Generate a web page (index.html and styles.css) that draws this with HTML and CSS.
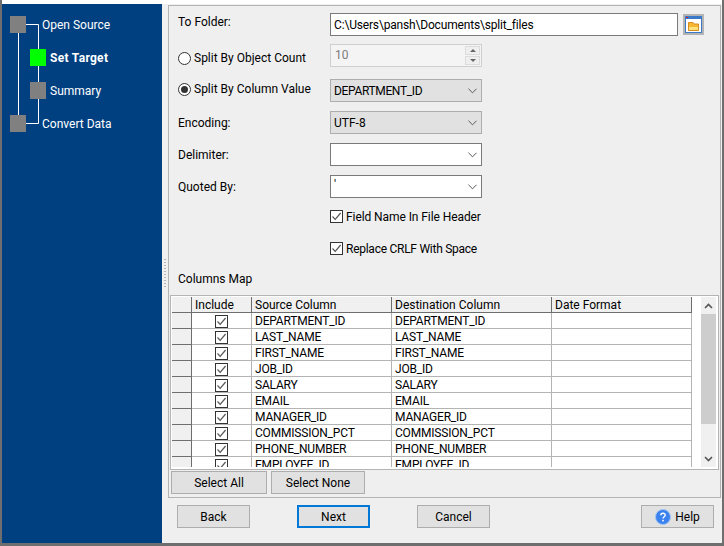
FILE: index.html
```html
<!DOCTYPE html>
<html lang="en">
<head>
<meta charset="utf-8">
<title>Convert Wizard</title>
<link rel="stylesheet" href="styles.css">
</head>
<body>
<svg class="defs" width="0" height="0" aria-hidden="true">
  <symbol id="chev" viewBox="0 0 10 6"><path d="M0.5 0.5 L5 5 L9.5 0.5" fill="none" stroke="#555" stroke-width="1.1"/></symbol>
  <symbol id="check" viewBox="0 0 13 13"><rect x="0.5" y="0.5" width="12" height="12" fill="#fff" stroke="#333"/><path d="M2.5 6.5 L5.2 9.4 L10.6 3" fill="none" stroke="#555" stroke-width="1.2"/></symbol>
</svg>
<div class="window">
  <nav class="sidebar">
    <svg class="tree" width="40" height="110" viewBox="0 0 40 110" aria-hidden="true">
      <path d="M8.5 0 V100 M8.5 8.5 H28.5 V107.5 H8.5" fill="none" stroke="#fff"/>
    </svg>
    <ol class="steps">
      <li class="step step-outer"><span class="node"></span><span>Open Source</span></li>
      <li class="step step-inner step-active"><span class="node node-active"></span><span>Set Target</span></li>
      <li class="step step-inner"><span class="node"></span><span>Summary</span></li>
      <li class="step step-outer"><span class="node"></span><span>Convert Data</span></li>
    </ol>
  </nav>
  <div class="gutter"><div class="grip"></div></div>
  <main class="main">
    <section class="panel">
      <div class="form">
        <div class="row row-folder">
          <label class="label lift-2">To Folder:</label>
          <div class="field field-wide">C:\Users\pansh\Documents\split_files</div>
          <button class="browse" type="button" aria-label="Browse">
            <svg width="17" height="17" viewBox="0 0 17 17">
              <rect x="0.5" y="0.5" width="16" height="16" fill="#fff" stroke="#3a78c8"/>
              <rect x="0" y="0" width="17" height="3" fill="#3a78c8"/>
              <rect x="1" y="1" width="2" height="1" fill="#d0202a"/>
              <path d="M3.5 6.5 H8 L9 8 H13.5 V14.5 H3.5 Z" fill="#f7b733" stroke="#d98a1e"/>
              <path d="M4 11 H13 V14 H4 Z" fill="#fde27a"/>
            </svg>
          </button>
        </div>
        <div class="row row-count">
          <label class="label radio-label drop-2"><span class="radio"></span>Split By Object Count</label>
          <div class="spinner">
            <span>10</span>
            <span class="spin-buttons">
              <span class="spin-btn"><i class="tri-up"></i></span>
              <span class="spin-btn"><i class="tri-down"></i></span>
            </span>
          </div>
        </div>
        <div class="row row-column">
          <label class="label radio-label lift-1"><span class="radio radio-on"></span>Split By Column Value</label>
          <div class="select select-gray"><span class="caps">DEPARTMENT_ID</span><svg class="chev"><use href="#chev"/></svg></div>
        </div>
        <div class="row">
          <label class="label">Encoding:</label>
          <div class="select select-gray"><span>UTF-8</span><svg class="chev"><use href="#chev"/></svg></div>
        </div>
        <div class="row">
          <label class="label">Delimiter:</label>
          <div class="select"><span></span><svg class="chev"><use href="#chev"/></svg></div>
        </div>
        <div class="row">
          <label class="label">Quoted By:</label>
          <div class="select"><span class="quote">'</span><svg class="chev"><use href="#chev"/></svg></div>
        </div>
        <div class="row row-check">
          <label class="check-label"><svg class="check"><use href="#check"/></svg>Field Name In File Header</label>
        </div>
        <div class="row row-check row-check-2">
          <label class="check-label check-label-tight"><svg class="check"><use href="#check"/></svg>Replace CRLF With Space</label>
        </div>
      </div>
      <h2 class="map-title">Columns Map</h2>
      <div class="grid-box">
        <div class="grid-view">
          <table class="grid">
            <colgroup><col class="c-row"><col class="c-inc"><col class="c-src"><col class="c-dst"><col class="c-fmt"></colgroup>
            <thead><tr><th></th><th>Include</th><th>Source Column</th><th>Destination Column</th><th>Date Format</th></tr></thead>
            <tbody>
              <tr><th></th><td class="cb"><svg class="check"><use href="#check"/></svg></td><td>DEPARTMENT_ID</td><td>DEPARTMENT_ID</td><td></td></tr>
              <tr><th></th><td class="cb"><svg class="check"><use href="#check"/></svg></td><td>LAST_NAME</td><td>LAST_NAME</td><td></td></tr>
              <tr><th></th><td class="cb"><svg class="check"><use href="#check"/></svg></td><td>FIRST_NAME</td><td>FIRST_NAME</td><td></td></tr>
              <tr><th></th><td class="cb"><svg class="check"><use href="#check"/></svg></td><td>JOB_ID</td><td>JOB_ID</td><td></td></tr>
              <tr><th></th><td class="cb"><svg class="check"><use href="#check"/></svg></td><td>SALARY</td><td>SALARY</td><td></td></tr>
              <tr><th></th><td class="cb"><svg class="check"><use href="#check"/></svg></td><td>EMAIL</td><td>EMAIL</td><td></td></tr>
              <tr><th></th><td class="cb"><svg class="check"><use href="#check"/></svg></td><td>MANAGER_ID</td><td>MANAGER_ID</td><td></td></tr>
              <tr><th></th><td class="cb"><svg class="check"><use href="#check"/></svg></td><td>COMMISSION_PCT</td><td>COMMISSION_PCT</td><td></td></tr>
              <tr><th></th><td class="cb"><svg class="check"><use href="#check"/></svg></td><td>PHONE_NUMBER</td><td>PHONE_NUMBER</td><td></td></tr>
              <tr><th></th><td class="cb"><svg class="check"><use href="#check"/></svg></td><td>EMPLOYEE_ID</td><td>EMPLOYEE_ID</td><td></td></tr>
            </tbody>
          </table>
        </div>
        <div class="scrollbar">
          <div class="sb-arrow"><svg width="9" height="6" viewBox="0 0 9 6"><path d="M1 5 L4.5 1.5 L8 5" fill="none" stroke="#555" stroke-width="1.6"/></svg></div>
          <div class="sb-thumb"></div>
          <div class="sb-arrow sb-arrow-end"><svg width="9" height="6" viewBox="0 0 9 6"><path d="M1 1 L4.5 4.5 L8 1" fill="none" stroke="#555" stroke-width="1.6"/></svg></div>
        </div>
      </div>
      <div class="select-buttons">
        <button class="btn btn-all" type="button">Select All</button>
        <button class="btn btn-none" type="button">Select None</button>
      </div>
    </section>
    <footer class="footer">
      <button class="btn btn-nav" type="button">Back</button>
      <button class="btn btn-nav btn-default" type="button">Next</button>
      <button class="btn btn-nav" type="button">Cancel</button>
      <button class="btn btn-nav btn-help" type="button">
        <svg width="16" height="16" viewBox="0 0 16 16" aria-hidden="true">
          <circle cx="8" cy="8" r="7.5" fill="#3b82ee" stroke="#9cc2f5"/>
          <path d="M5.8 6.2 C5.8 3.6 10.2 3.6 10.2 6.1 C10.2 7.8 8 7.7 8 9.6" fill="none" stroke="#fff" stroke-width="1.4"/>
          <rect x="7.2" y="10.8" width="1.6" height="1.6" fill="#fff"/>
        </svg>
        <span>Help</span>
      </button>
    </footer>
  </main>
</div>
</body>
</html>
```
FILE: styles.css
```css
* { box-sizing: border-box; }
html, body { margin: 0; padding: 0; }
body {
  width: 724px;
  height: 546px;
  overflow: hidden;
  background: #fff;
  font: 12px/16px Roboto, "Noto Sans", sans-serif;
  color: #000;
}
.defs { display: block; height: 0; }
.window {
  display: flex;
  width: 724px;
  height: 546px;
  background: linear-gradient(#fff 4px, #f0f0f0 4px);
  border-left: 2px solid #6e6e6e;
  border-right: 2px solid #6e6e6e;
  border-bottom: 3px solid #6e6e6e;
}
.sidebar {
  position: relative;
  width: 160px;
  margin-top: 4px;
  background: #004080;
  color: #fff;
}
.tree { position: absolute; left: 8px; top: 12px; }
.steps {
  position: relative;
  list-style: none;
  margin: 0;
  padding: 12px 0 0;
}
.step { display: flex; align-items: center; height: 17px; margin-bottom: 16px; }
.step-outer { padding-left: 8px; gap: 16px; }
.step-inner { padding-left: 28px; gap: 4px; }
.step-active { font-weight: 700; letter-spacing: 0.3px; }
.node { width: 16px; height: 17px; background: #808080; }
.node-active { background: #00ff00; }

.gutter {
  display: flex;
  align-items: center;
  justify-content: center;
  width: 6px;
  padding-top: 4px;
}
.grip {
  width: 2px;
  height: 30px;
  background: repeating-linear-gradient(#b4b4b4 0 1px, transparent 1px 3px);
}
.main { display: flex; flex-direction: column; width: 553px; padding-top: 5px; }
.panel {
  height: 493px;
  padding-top: 7px;
  background: #efefef;
  border: 1px solid #b4b4b4;
}
.form { display: flex; flex-direction: column; padding-left: 9px; }
.row { display: flex; align-items: center; height: 23px; margin-bottom: 9px; }
.row-folder { margin-bottom: 8px; }
.row-count { margin-bottom: 12px; }
.row-check { margin-top: -2px; padding-left: 152px; }
.row-check-2 { margin-top: 0; margin-bottom: 0; }
.label { display: flex; align-items: center; width: 152px; flex: none; }
.lift-2 { margin-top: -5px; }
.lift-1 { margin-top: -3px; }
.drop-2 { margin-top: 5px; }
.radio-label { gap: 3px; }
.radio {
  position: relative;
  width: 13px;
  height: 13px;
  border: 1px solid #333;
  border-radius: 50%;
  background: #fff;
}
.radio-on::after {
  content: "";
  position: absolute;
  inset: 2px;
  border-radius: 50%;
  background: #333;
}
.field {
  width: 348px;
  height: 23px;
  padding: 3px 3px 0;
  letter-spacing: -0.17px;
  background: #fff;
  border: 1px solid #7a7a7a;
}
.browse {
  display: flex;
  align-items: center;
  justify-content: center;
  width: 21px;
  height: 21px;
  margin-left: 5px;
  padding: 0;
  background: #e1e1e1;
  border: 2px solid #b4b4b4;
}
.spinner {
  display: flex;
  justify-content: space-between;
  width: 152px;
  height: 23px;
  padding: 0 1px 1px 4px;
  color: #7d7d7d;
  background: #f4f4f4;
  border: 1px solid #cfcfcf;
}
.spinner > span:first-child { margin-top: 2px; }
.spin-buttons { display: flex; flex-direction: column; width: 15px; gap: 1px; padding-top: 1px; }
.spin-btn {
  display: flex;
  align-items: center;
  justify-content: center;
  height: 9px;
  background: #efefef;
  border: 1px solid #dcdcdc;
}
.tri-up, .tri-down { width: 0; height: 0; border-left: 3px solid transparent; border-right: 3px solid transparent; }
.tri-up { border-bottom: 3px solid #666; }
.tri-down { border-top: 3px solid #666; }
.select {
  display: flex;
  align-items: center;
  justify-content: space-between;
  width: 152px;
  height: 23px;
  padding: 0 4px 0 3px;
  background: #fff;
  border: 1px solid #7a7a7a;
}
.select-gray { background: #e1e1e1; border-color: #adadad; }
.caps { letter-spacing: -0.35px; }
.quote { margin-top: -3px; }
.chev { width: 9px; height: 6px; flex: none; }
.check { width: 13px; height: 13px; flex: none; }
.check-label { display: flex; align-items: center; gap: 3px; letter-spacing: -0.08px; }
.check-label-tight { letter-spacing: -0.26px; }
.map-title {
  margin: 11px 0 8px 9px;
  font-size: 12px;
  line-height: 16px;
  font-weight: 400;
}
.grid-box {
  display: flex;
  height: 175px;
  margin-left: 1px;
  width: 549px;
  padding: 1px 1px 2px 1px;
  background: #fff;
  border: 1px solid #b4b4b4;
}
.grid-view { width: 520px; height: 170px; overflow: hidden; flex: none; }
.grid { width: 520px; table-layout: fixed; border-collapse: separate; border-spacing: 0; }
.c-row { width: 20px; }
.c-inc { width: 60px; }
.c-src { width: 140px; }
.c-dst { width: 160px; }
.c-fmt { width: 140px; }
.grid th, .grid td {
  height: 16px;
  padding: 1px 3px 0;
  font-weight: 400;
  text-align: left;
  line-height: 14px;
  white-space: nowrap;
  overflow: hidden;
}
.grid thead th { padding-top: 2px; line-height: 13px; }
.grid th {
  background: #f0f0f0;
  border-right: 1px solid #6e6e6e;
  border-bottom: 1px solid #6e6e6e;
}
.grid td {
  letter-spacing: -0.2px;
  border-right: 1px solid #b4b4b4;
  border-bottom: 1px solid #b4b4b4;
}
.grid td.cb { padding: 0; text-align: center; }
.grid td.cb .check { display: block; margin: 1px auto 0; }
.scrollbar {
  display: flex;
  flex-direction: column;
  width: 15px;
  height: 170px;
  margin-left: 9px;
  background: #f0f0f0;
}
.sb-arrow { display: flex; align-items: center; justify-content: center; height: 17px; flex: none; }
.sb-arrow-end { margin-top: auto; }
.sb-thumb { height: 110px; background: #cdcdcd; }
.select-buttons { display: flex; gap: 4px; padding: 1px 0 0 2px; }
.btn {
  height: 23px;
  padding: 0;
  font: inherit;
  color: #000;
  background: #e1e1e1;
  border: 1px solid #adadad;
}
.btn-all { width: 96px; }
.btn-none { width: 94px; }
.footer {
  display: flex;
  gap: 47px;
  flex: 1;
  padding: 7px 7px 0 9px;
  background: #efefef;
}
.btn-nav { width: 73px; }
.btn-default { border: 2px solid #0078d7; }
.btn-help {
  display: flex;
  align-items: center;
  justify-content: center;
  gap: 4px;
  margin-left: auto;
}
```
